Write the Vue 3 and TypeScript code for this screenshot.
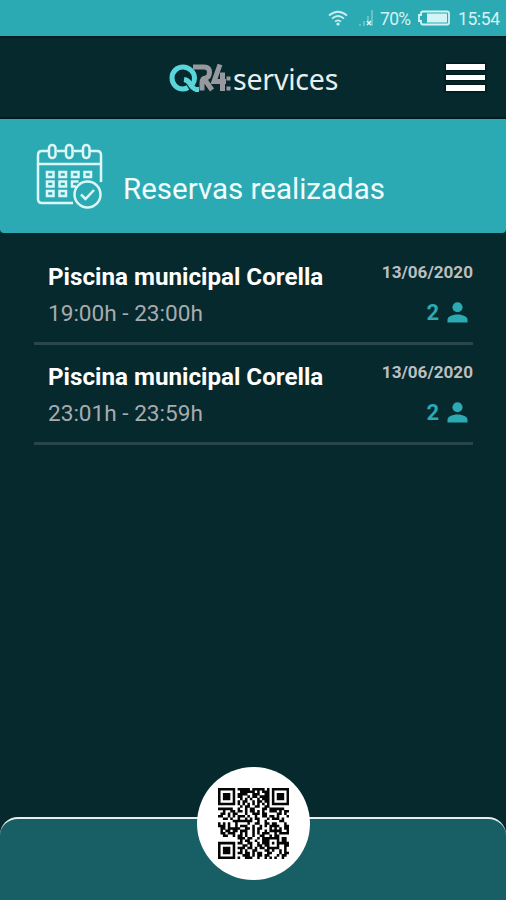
<script setup lang="ts">
interface Booking {
  id: number
  place: string
  hours: string
  date: string
  people: number
}

const bookings: Booking[] = [
  { id: 1, place: 'Piscina municipal Corella', hours: '19:00h - 23:00h', date: '13/06/2020', people: 2 },
  { id: 2, place: 'Piscina municipal Corella', hours: '23:01h - 23:59h', date: '13/06/2020', people: 2 },
]

const qrRows: string[] = [
  '#######.#####.#####.#.#######',
  '#.....#..######.#.###.#.....#',
  '#.###.#.####..###..##.#.###.#',
  '#.###.#.##..#.##.####.#.###.#',
  '#.###.#..#.#.#..#.###.#.###.#',
  '#.....#.#.##..#.##.##.#.....#',
  '#######.#.#.#.#.#.#.#.#######',
  '.........#.##..##..##........',
  '######..#..#.##...##.######..',
  '..#..##.##.#.##.#.#..###.#.##',
  '.##.#.##...#..###.##....##.#.',
  '##..#.#.###.#..#..##.##.#...#',
  '..##.#..#..#.#.##...#.###.#..',
  '......########..#..#.....##..',
  '#.#.#..#....#..##..##.##...#.',
  '###.#..#.###..#..#.#.####..##',
  '.##.#####..##.#.##...#.#.#.##',
  '.#.##.##.###..#.#..#.#####..#',
  '.##.###..#.#..#.#.###..#.####',
  '..##..#.##.#..#..##..#.##....',
  '........###.##..#.#######.##.',
  '.........#.##..#..###...#.##.',
  '#######.##..##..#.###.#.#####',
  '#.....#...##.#..##.##...#..##',
  '#.###.#.###.##.#.##.#####..#.',
  '#.###.#..#.#..##...##.#..#.#.',
  '#.###.#.##.##.#.##..##...#.##',
  '#.....#...###.#.##.##...#.##.',
  '#######.#..###..#..#.#.#..#..',
]

const qrPath: string = qrRows
  .flatMap((row, y) => [...row].map((c, x) => (c === '#' ? `M${x} ${y}h1.04v1.04h-1.04z` : '')))
  .join('')
</script>

<template>
  <main class="screen">
    <div class="status">
      <svg class="wifi" viewBox="0 0 20 16">
        <path d="M1 5.500Q10-2 19 5.500M4 8.700Q10 3.400 16 8.700M7 11.700Q10 9 13 11.700" />
        <circle cx="10" cy="14" r="1.6" />
      </svg>
      <svg class="signal" viewBox="0 0 14 16">
        <path d="M1 14v2M5 11v5M9 6v5M13 0v16" />
        <path class="cross" d="M8 11l4 4M12 11l-4 4" />
      </svg>
      <span class="percent">70%</span>
      <svg class="battery" viewBox="0 0 34 16">
        <path class="shell" d="M6 1.500h24q2 0 2 2v9q0 2-2 2H6q-2 0-2-2v-1.500H2V5h2V3.500q0-2 2-2z" />
        <path class="charge" d="M10 3.500h20v9H10z" />
      </svg>
      <span class="clock">15:54</span>
    </div>

    <header class="topbar">
      <div class="brand">
        <svg class="mark" viewBox="0 0 63 30">
          <path class="gray" d="M25 4h11q5.500 0 5.500 5.200 0 5-4 5.800-3.500.5-3.500 5v7.500M36 15.500l8 11.500" />
          <path class="gray" d="M52 1.500L46 18.500H58M54.500 9.500V28" />
          <path class="dots" d="M58.500 13.500h4v4h-4zM58.500 23.500h4v4h-4z" />
          <path class="cyan" d="M20 24.500q-2.500 1.500-5 1.500C8.500 26 4 21 4 14.800S9 4 15 4 26.500 9 26.500 15q0 4-2 6.500M16 16.500q4 .5 6 4.500t6 5.500h3" />
        </svg>
        <span class="word">services</span>
      </div>
      <button class="menu" aria-label="Menú">
        <span class="bar"></span><span class="bar"></span><span class="bar"></span>
      </button>
    </header>

    <section class="banner">
      <svg class="calendar" viewBox="0 0 68 66">
        <path d="M13 8H6q-4 0-4 4v44q0 4 4 4h31M21 8h8.500M37.500 8H46M54 8h7q4 0 4 4v27M2 21h63" />
        <rect x="13" y="2" width="6.500" height="13" rx="3.200" />
        <rect x="30" y="2" width="6.500" height="13" rx="3.200" />
        <rect x="47" y="2" width="6.500" height="13" rx="3.200" />
        <path d="M11 29h6.500v5H11zM23.500 29H30v5h-6.500zM36 29h6.500v5H36zM48.500 29H55v5h-6.500zM11 38.500h6.500v5H11zM23.500 38.500H30v5h-6.500zM40 43.500h-4v-5h6.500M11 48h6.500v5H11zM23.500 48H30v5h-6.500z" />
        <circle cx="51.500" cy="51.500" r="13" />
        <path d="M45 51.500l4.500 4.500 8.500-9" />
      </svg>
      <h1 class="title">Reservas realizadas</h1>
    </section>

    <ul class="list">
      <li v-for="b in bookings" :key="b.id" class="booking">
        <div class="info">
          <strong class="place">{{ b.place }}</strong>
          <span class="hours">{{ b.hours }}</span>
        </div>
        <div class="meta">
          <span class="date">{{ b.date }}</span>
          <span class="people">
            {{ b.people }}
            <svg class="person" viewBox="0 0 22 22">
              <circle cx="11" cy="5.500" r="5.300" />
              <path d="M.5 21.500v-3C.5 15 7 13.200 11 13.200S21.500 15 21.500 18.500v3z" />
            </svg>
          </span>
        </div>
      </li>
    </ul>

    <footer class="dock">
      <button class="scan" aria-label="QR">
        <svg class="qr" viewBox="0 0 29 29"><path :d="qrPath" /></svg>
      </button>
    </footer>
  </main>
</template>

<style>
body {
  margin: 0;
  background: #05292d;
}
</style>

<style scoped>
.screen {
  width: 506px;
  height: 900px;
  display: flex;
  flex-direction: column;
  overflow: hidden;
  background: #05292d;
  font-family: Roboto, 'Liberation Sans', sans-serif;
}
.status {
  height: 36px;
  flex: none;
  box-sizing: border-box;
  padding: 0 7px 0 0;
  display: flex;
  align-items: center;
  justify-content: flex-end;
  background: #2caab3;
  color: #d3f3f4;
  font-size: 17.5px;
}
.wifi {
  width: 20px;
  height: 16px;
  margin-right: 11px;
  fill: none;
  stroke: #c9eef0;
  stroke-width: 1.8;
}
.wifi circle {
  fill: #d3f3f4;
  stroke: none;
}
.signal {
  width: 14px;
  height: 16px;
  margin-right: 7px;
  fill: none;
  stroke: #8ad2d7;
  stroke-width: 1.2;
}
.signal .cross {
  stroke: #e6fafa;
  stroke-width: 1.6;
}
.percent {
  width: 31px;
  margin: 2px 6px 0 0;
  letter-spacing: -0.7px;
}
.battery {
  width: 34px;
  height: 16px;
  margin-right: 7px;
}
.shell {
  fill: none;
  stroke: #d3f3f4;
  stroke-width: 1.8;
}
.charge {
  fill: #d3f3f4;
}
.clock {
  width: 41px;
  margin-top: 2px;
  letter-spacing: -0.4px;
}
.topbar {
  height: 83px;
  flex: none;
  box-sizing: border-box;
  border-top: 2px solid #021d20;
  border-bottom: 2px solid #021d20;
  padding: 0 21px 0 168px;
  display: flex;
  align-items: center;
  justify-content: space-between;
}
.brand {
  display: flex;
  align-items: center;
}
.mark {
  width: 63px;
  height: 30px;
  fill: none;
  stroke-width: 5;
}
.gray {
  stroke: #98999e;
}
.cyan {
  stroke: #5bd5dc;
}
.dots {
  fill: #98999e;
}
.word {
  margin: 3px 0 0 2px;
  font-family: 'Noto Sans', sans-serif;
  font-size: 28.5px;
  line-height: 30px;
  font-weight: 400;
  letter-spacing: -0.2px;
  color: #e9eeee;
}
.menu {
  width: 39px;
  padding: 0;
  border: 0;
  background: none;
  display: flex;
  flex-direction: column;
  gap: 5px;
}
.bar {
  height: 5.5px;
  background: #fff;
  box-shadow: 0 0 2px 1px #001518;
}
.banner {
  height: 114px;
  flex: none;
  box-sizing: border-box;
  padding: 24px 0 0 36px;
  display: flex;
  align-items: flex-start;
  background: #2caab3;
  border-radius: 0 0 4px 4px;
}
.calendar {
  width: 68px;
  height: 66px;
  margin-right: 19px;
  fill: none;
  stroke: #dcf7f8;
  stroke-width: 2.5;
}
.title {
  margin: 28px 0 0;
  font-size: 29.5px;
  line-height: 36px;
  font-weight: 400;
  color: #f0fdfd;
}
.list {
  margin: 12px 33px 0 34px;
  padding: 0;
  list-style: none;
}
.booking {
  height: 100px;
  box-sizing: border-box;
  padding: 17px 0 0 14px;
  border-bottom: 3px solid #29464b;
  display: flex;
  justify-content: space-between;
}
.info,
.meta {
  display: flex;
  flex-direction: column;
}
.meta {
  align-items: flex-end;
}
.place {
  font-size: 24.2px;
  line-height: 30px;
  font-weight: 700;
  color: #fff;
}
.hours {
  margin-top: 8px;
  font-size: 22.6px;
  line-height: 28px;
  color: #a8abae;
}
.date {
  font-size: 17.1px;
  line-height: 20px;
  font-weight: 700;
  color: #bcbec1;
}
.people {
  margin: 18px 5px 0 0;
  display: flex;
  align-items: center;
  gap: 8px;
  font-size: 22px;
  line-height: 26px;
  font-weight: 700;
  color: #2caab3;
}
.person {
  width: 21px;
  height: 21px;
  margin-top: -2px;
  fill: #2caab3;
}
.dock {
  height: 83px;
  flex: none;
  box-sizing: border-box;
  margin-top: auto;
  border-top: 2px solid #e5efef;
  border-radius: 18px 18px 0 0;
  background: #175f64;
  display: flex;
  justify-content: center;
}
.scan {
  width: 113px;
  height: 113px;
  flex: none;
  margin: -52px 0 0;
  padding: 0;
  border: 0;
  border-radius: 50%;
  background: #fff;
  display: flex;
  align-items: center;
  justify-content: center;
}
.qr {
  width: 71px;
  height: 71px;
  fill: #050505;
}
</style>
